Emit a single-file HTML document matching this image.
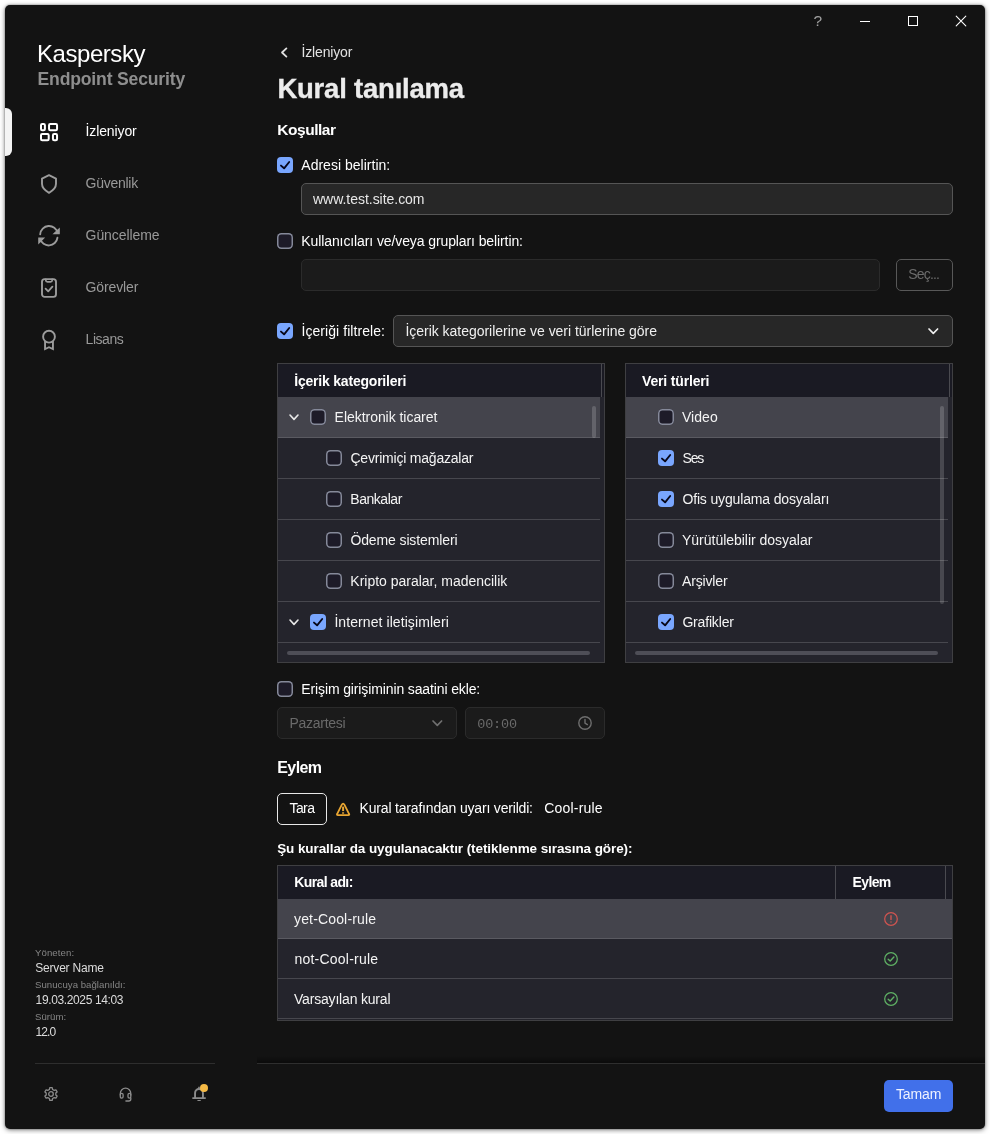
<!DOCTYPE html>
<html lang="tr">
<head>
<meta charset="utf-8">
<title>Kural tanılama</title>
<style>
*{box-sizing:border-box;margin:0;padding:0}
html,body{width:990px;height:1134px;background:#fff;overflow:hidden}
body{font-family:"Liberation Sans",sans-serif;color:#fff;font-size:14px;position:relative}
.win{position:absolute;left:5px;top:5px;width:980px;height:1124px;background:#131313;border-radius:5px;box-shadow:0 1px 5px rgba(0,0,0,.5),0 0 2px rgba(0,0,0,.4)}
.a{position:absolute}
.t{position:absolute;white-space:nowrap}
.cb{position:absolute;width:16px;height:16px;border-radius:4.5px;background:#1d1b28;box-shadow:inset 0 0 0 1.5px #858999}
.cb.on{background:#79a6fe;box-shadow:none;border-radius:4px}
.cb svg{position:absolute;left:0;top:0;width:16px;height:16px}
.inp{position:absolute;border:1px solid #555;border-radius:5px;background:#272727}
.inp.dis{border-color:#2b2b2b;background:#1b1b1b}
.tbl{position:absolute;border:1px solid #3f3f42;background:#24242c;overflow:hidden}
.th{position:absolute;left:0;top:0;background:#1a1a23}
.row{position:absolute;left:0;height:41px;border-bottom:1px solid #47474e}
.row.sel{background:#44444c;border-bottom-color:#5a5a61}
svg{display:block;overflow:visible}
.ic{position:absolute;fill:none;stroke-linecap:round;stroke-linejoin:round}
</style>
</head>
<body>
<div id="app" style="position:absolute;left:0;top:0;width:990px;height:1134px;will-change:transform">
<div class="win"></div>
<!-- title bar -->
<div class="t" style="left:813.60px;top:10px;font-size:15.5px;line-height:22px;height:22px;color:#a2a2a2;">?</div>
<div class="a" style="left:860px;top:21px;width:10px;height:1px;background:#fff"></div>
<div class="a" style="left:908px;top:16px;width:10px;height:10px;border:1px solid #fff"></div>
<svg class="ic" style="left:956px;top:16px" width="10" height="10" stroke="#fff" stroke-width="1.1" stroke-linecap="butt"><path d="M0.2 0.2 L9.8 9.8 M9.8 0.2 L0.2 9.8"/></svg>
<!-- sidebar -->
<div class="t" style="left:37.00px;top:37px;font-size:24px;line-height:34px;height:34px;color:#fff;letter-spacing:-0.445px;">Kaspersky</div>
<div class="t" style="left:37.50px;top:67px;font-size:17.6px;line-height:25px;height:25px;color:#8e8e8e;font-weight:bold;letter-spacing:-0.176px;">Endpoint Security</div>
<div class="a" style="left:5px;top:108px;width:7px;height:48px;background:#f4f4f4;border-radius:0 6px 6px 0"></div>
<div class="t" style="left:85.60px;top:121px;font-size:14px;line-height:20px;height:20px;color:#fff;letter-spacing:-0.128px;">İzleniyor</div>
<div class="t" style="left:85.60px;top:173px;font-size:14px;line-height:20px;height:20px;color:#999;letter-spacing:-0.266px;">Güvenlik</div>
<div class="t" style="left:85.60px;top:225px;font-size:14px;line-height:20px;height:20px;color:#999;letter-spacing:-0.087px;">Güncelleme</div>
<div class="t" style="left:85.60px;top:277px;font-size:14px;line-height:20px;height:20px;color:#999;letter-spacing:-0.141px;">Görevler</div>
<div class="t" style="left:85.60px;top:329px;font-size:14px;line-height:20px;height:20px;color:#999;letter-spacing:-0.460px;">Lisans</div>
<svg class="ic" style="left:40px;top:123px" width="18" height="18" stroke="#fff" stroke-width="2"><rect x="1" y="1" width="3.9" height="6.2" rx="1.2"/><rect x="9.05" y="1" width="8" height="6.2" rx="1.2"/><rect x="1" y="11" width="7.7" height="6.2" rx="1.2"/><rect x="12.95" y="11" width="4.1" height="6.2" rx="1.2"/></svg>
<svg class="ic" style="left:41px;top:174px" width="16" height="20" stroke="#9c9c9c" stroke-width="1.9"><path d="M8 1.1 L15 4.6 V9.8 C15 13.8 12 16.6 8 18.8 C4 16.6 1 13.8 1 9.8 V4.6 Z"/></svg>
<svg class="ic" style="left:38px;top:225px" width="22" height="22" stroke="#9c9c9c" stroke-width="1.9" stroke-linecap="butt"><path d="M2.2 9.2 A8.8 8.8 0 0 1 19.6 8"/><path d="M19.4 12.8 A8.8 8.8 0 0 1 2.2 14"/><path d="M21.2 3.8 V8.6 H16 Z" fill="#9c9c9c" stroke-width="1.2" stroke-linejoin="miter"/><path d="M0.85 18 V13.2 H5.7 Z" fill="#9c9c9c" stroke-width="1.2" stroke-linejoin="miter"/></svg>
<svg class="ic" style="left:41px;top:277px" width="16" height="21" stroke="#9c9c9c" stroke-width="1.9"><rect x="1" y="2.1" width="14" height="17.75" rx="2.6"/><path d="M4.8 2.3 V3.3 A1.6 1.6 0 0 0 6.4 4.9 H9.6 A1.6 1.6 0 0 0 11.2 3.3 V2.3" stroke-width="1.7"/><path d="M4.6 11.6 L7.2 14.3 L11.4 9.7" stroke-width="1.8"/></svg>
<svg class="ic" style="left:42px;top:329px" width="14" height="21" stroke="#9c9c9c" stroke-width="1.9"><circle cx="7" cy="7.7" r="5.9"/><path d="M3.06 12.8 V20.1 L7 18.2 L10.94 20.1 V12.8" stroke-linejoin="miter"/></svg>
<div class="t" style="left:35.00px;top:946px;font-size:9.6px;line-height:13px;height:13px;color:#868686;letter-spacing:0.100px;">Yöneten:</div>
<div class="t" style="left:35.30px;top:960px;font-size:12px;line-height:17px;height:17px;color:#dcdcdc;letter-spacing:-0.209px;">Server Name</div>
<div class="t" style="left:35.00px;top:978px;font-size:9.6px;line-height:13px;height:13px;color:#868686;letter-spacing:0.043px;">Sunucuya bağlanıldı:</div>
<div class="t" style="left:35.60px;top:992px;font-size:12px;line-height:17px;height:17px;color:#dcdcdc;letter-spacing:-0.369px;">19.03.2025 14:03</div>
<div class="t" style="left:35.00px;top:1010px;font-size:9.6px;line-height:13px;height:13px;color:#868686;letter-spacing:0.060px;">Sürüm:</div>
<div class="t" style="left:35.60px;top:1024px;font-size:12px;line-height:17px;height:17px;color:#dcdcdc;letter-spacing:-0.925px;">12.0</div>
<div class="a" style="left:35px;top:1063px;width:180px;height:1px;background:#2e2e2e"></div>
<svg class="ic" style="left:44px;top:1087px" width="14" height="14" stroke="#8c8c8c" stroke-width="1.3"><circle cx="7" cy="7" r="2.3"/><path d="M5.8 0.7 H8.2 L8.6 2.5 L10.2 3.4 L11.9 2.8 L13.1 4.9 L11.8 6.1 V7.9 L13.1 9.1 L11.9 11.2 L10.2 10.6 L8.6 11.5 L8.2 13.3 H5.8 L5.4 11.5 L3.8 10.6 L2.1 11.2 L0.9 9.1 L2.2 7.9 V6.1 L0.9 4.9 L2.1 2.8 L3.8 3.4 L5.4 2.5 Z"/></svg>
<svg class="ic" style="left:118.5px;top:1086.5px" width="13" height="15" stroke="#8c8c8c" stroke-width="1.3"><path d="M1.3 8 V6.6 A5.25 5.4 0 0 1 11.8 6.6 V8"/><rect x="1.3" y="6.4" width="2.8" height="4.7" rx="1.4"/><rect x="9" y="6.4" width="2.8" height="4.7" rx="1.4"/><path d="M11.8 11 V12 A2 2 0 0 1 9.8 14 H6.9"/></svg>
<svg class="ic" style="left:192px;top:1086px" width="14" height="16" stroke="#8c8c8c" stroke-width="1.9" stroke-linecap="butt"><path d="M3.06 12.1 V6.9 A3.94 3.94 0 0 1 10.94 6.9 V12.1"/><path d="M1 12.1 H13.1" stroke-width="1.8"/><path d="M7 1.2 V3.2" stroke-width="1.4"/><path d="M5.9 14.5 H8.3" stroke-width="1.2"/></svg>
<div class="a" style="left:199.8px;top:1083.9px;width:8.4px;height:8.4px;border-radius:50%;background:#f5b945"></div>
<!-- main -->
<svg class="ic" style="left:281.4px;top:47.8px" width="6" height="9" stroke="#e0e0e0" stroke-width="1.8"><path d="M5.4 0.4 L1 4.5 L5.4 8.6"/></svg>
<div class="t" style="left:301.50px;top:42px;font-size:14px;line-height:20px;height:20px;color:#e2e2e2;letter-spacing:-0.153px;">İzleniyor</div>
<div class="t" style="left:277.40px;top:70px;font-size:27.5px;line-height:38px;height:38px;color:#ececec;font-weight:bold;letter-spacing:-0.214px;-webkit-text-stroke:0.35px #ececec;">Kural tanılama</div>
<div class="t" style="left:277.30px;top:119px;font-size:15.5px;line-height:22px;height:22px;color:#fff;font-weight:bold;letter-spacing:-0.471px;">Koşullar</div>
<div class="cb on" style="left:277px;top:157px"><svg viewBox="0 0 16 16"><path d="M4 8.6 L7.1 11.3 L12.2 5" fill="none" stroke="#07071a" stroke-width="1.9" stroke-linecap="round" stroke-linejoin="round"/></svg></div>
<div class="t" style="left:301.30px;top:155px;font-size:14px;line-height:20px;height:20px;color:#fff;letter-spacing:0.014px;">Adresi belirtin:</div>
<div class="inp" style="left:301px;top:183px;width:652px;height:32px"></div>
<div class="t" style="left:313.06px;top:189px;font-size:14px;line-height:20px;height:20px;color:#e8e8e8;letter-spacing:-0.035px;">www.test.site.com</div>
<div class="cb g" style="left:277px;top:233px"></div>
<div class="t" style="left:301.30px;top:231px;font-size:14px;line-height:20px;height:20px;color:#fff;letter-spacing:-0.102px;">Kullanıcıları ve/veya grupları belirtin:</div>
<div class="inp dis" style="left:301px;top:259px;width:579px;height:32px"></div>
<div class="inp dis" style="left:896px;top:259px;width:57px;height:32px;background:#151515;border-color:#585858"></div>
<div class="t" style="left:908.30px;top:264px;font-size:14px;line-height:20px;height:20px;color:#6c6c6c;letter-spacing:-0.822px;">Seç...</div>
<div class="cb on" style="left:277px;top:323px"><svg viewBox="0 0 16 16"><path d="M4 8.6 L7.1 11.3 L12.2 5" fill="none" stroke="#07071a" stroke-width="1.9" stroke-linecap="round" stroke-linejoin="round"/></svg></div>
<div class="t" style="left:301.50px;top:321px;font-size:14px;line-height:20px;height:20px;color:#fff;letter-spacing:0.062px;">İçeriği filtrele:</div>
<div class="inp" style="left:393px;top:315px;width:560px;height:32px"></div>
<div class="t" style="left:405.50px;top:321px;font-size:14px;line-height:20px;height:20px;color:#f0f0f0;letter-spacing:-0.032px;">İçerik kategorilerine ve veri türlerine göre</div>
<svg class="ic" style="left:928.7px;top:329px" width="8.6" height="4.4" stroke="#f0f0f0" stroke-width="1.7"><path d="M0 0 L4.3 4.4 L8.6 0"/></svg>
<div class="tbl" style="left:277px;top:363px;width:328px;height:300px">
<div class="th" style="width:324px;height:33px;border-right:1px solid #4a4a50"></div>
<div class="th" style="left:324px;width:2px;height:33px"></div>
<div class="row sel" style="top:33px;width:322px"></div>
<div class="row" style="top:74px;width:322px"></div>
<div class="row" style="top:115px;width:322px"></div>
<div class="row" style="top:156px;width:322px"></div>
<div class="row" style="top:197px;width:322px"></div>
<div class="row" style="top:238px;width:322px"></div>
<div class="row" style="top:279px;width:322px"></div>
<div class="a" style="left:314px;top:42px;width:4px;height:32px;border-radius:2px;background:rgba(255,255,255,.17)"></div>
<div class="a" style="left:9px;top:286.5px;width:303px;height:4px;border-radius:2px;background:#4e4e57"></div>
</div>
<div class="t" style="left:294.30px;top:371px;font-size:14px;line-height:20px;height:20px;color:#fff;font-weight:bold;letter-spacing:-0.213px;">İçerik kategorileri</div>
<div class="tbl" style="left:625px;top:363px;width:328px;height:300px">
<div class="th" style="width:324px;height:33px;border-right:1px solid #4a4a50"></div>
<div class="th" style="left:324px;width:2px;height:33px"></div>
<div class="row sel" style="top:33px;width:322px"></div>
<div class="row" style="top:74px;width:322px"></div>
<div class="row" style="top:115px;width:322px"></div>
<div class="row" style="top:156px;width:322px"></div>
<div class="row" style="top:197px;width:322px"></div>
<div class="row" style="top:238px;width:322px"></div>
<div class="row" style="top:279px;width:322px"></div>
<div class="a" style="left:314px;top:42px;width:4px;height:198px;border-radius:2px;background:rgba(255,255,255,.17)"></div>
<div class="a" style="left:9px;top:286.5px;width:303px;height:4px;border-radius:2px;background:#4e4e57"></div>
</div>
<div class="t" style="left:642.00px;top:371px;font-size:14px;line-height:20px;height:20px;color:#fff;font-weight:bold;letter-spacing:-0.159px;">Veri türleri</div>
<svg class="ic" style="left:290px;top:415.3px" width="8" height="4.4" stroke="#e8e8e8" stroke-width="1.6"><path d="M0 0 L4 4.4 L8 0"/></svg>
<svg class="ic" style="left:290px;top:620.3px" width="8" height="4.4" stroke="#e8e8e8" stroke-width="1.6"><path d="M0 0 L4 4.4 L8 0"/></svg>
<div class="cb" style="left:310px;top:409px"></div>
<div class="t" style="left:334.60px;top:407px;font-size:14px;line-height:20px;height:20px;color:#f4f4f4;letter-spacing:-0.041px;">Elektronik ticaret</div>
<div class="cb" style="left:326px;top:450px"></div>
<div class="t" style="left:350.40px;top:448px;font-size:14px;line-height:20px;height:20px;color:#f4f4f4;letter-spacing:-0.206px;">Çevrimiçi mağazalar</div>
<div class="cb" style="left:326px;top:491px"></div>
<div class="t" style="left:350.30px;top:489px;font-size:14px;line-height:20px;height:20px;color:#f4f4f4;letter-spacing:-0.464px;">Bankalar</div>
<div class="cb" style="left:326px;top:532px"></div>
<div class="t" style="left:350.40px;top:530px;font-size:14px;line-height:20px;height:20px;color:#f4f4f4;letter-spacing:-0.116px;">Ödeme sistemleri</div>
<div class="cb" style="left:326px;top:573px"></div>
<div class="t" style="left:350.30px;top:571px;font-size:14px;line-height:20px;height:20px;color:#f4f4f4;letter-spacing:-0.006px;">Kripto paralar, madencilik</div>
<div class="cb on" style="left:310px;top:614px"><svg viewBox="0 0 16 16"><path d="M4 8.6 L7.1 11.3 L12.2 5" fill="none" stroke="#07071a" stroke-width="1.9" stroke-linecap="round" stroke-linejoin="round"/></svg></div>
<div class="t" style="left:334.40px;top:612px;font-size:14px;line-height:20px;height:20px;color:#f4f4f4;letter-spacing:0.079px;">İnternet iletişimleri</div>
<div class="cb" style="left:658px;top:409px"></div>
<div class="t" style="left:682.00px;top:407px;font-size:14px;line-height:20px;height:20px;color:#f4f4f4;letter-spacing:0.034px;">Video</div>
<div class="cb on" style="left:658px;top:450px"><svg viewBox="0 0 16 16"><path d="M4 8.6 L7.1 11.3 L12.2 5" fill="none" stroke="#07071a" stroke-width="1.9" stroke-linecap="round" stroke-linejoin="round"/></svg></div>
<div class="t" style="left:682.50px;top:448px;font-size:14px;line-height:20px;height:20px;color:#f4f4f4;letter-spacing:-1.200px;">Ses</div>
<div class="cb on" style="left:658px;top:491px"><svg viewBox="0 0 16 16"><path d="M4 8.6 L7.1 11.3 L12.2 5" fill="none" stroke="#07071a" stroke-width="1.9" stroke-linecap="round" stroke-linejoin="round"/></svg></div>
<div class="t" style="left:682.40px;top:489px;font-size:14px;line-height:20px;height:20px;color:#f4f4f4;letter-spacing:-0.145px;">Ofis uygulama dosyaları</div>
<div class="cb" style="left:658px;top:532px"></div>
<div class="t" style="left:682.00px;top:530px;font-size:14px;line-height:20px;height:20px;color:#f4f4f4;letter-spacing:-0.017px;">Yürütülebilir dosyalar</div>
<div class="cb" style="left:658px;top:573px"></div>
<div class="t" style="left:682.00px;top:571px;font-size:14px;line-height:20px;height:20px;color:#f4f4f4;letter-spacing:-0.155px;">Arşivler</div>
<div class="cb on" style="left:658px;top:614px"><svg viewBox="0 0 16 16"><path d="M4 8.6 L7.1 11.3 L12.2 5" fill="none" stroke="#07071a" stroke-width="1.9" stroke-linecap="round" stroke-linejoin="round"/></svg></div>
<div class="t" style="left:682.40px;top:612px;font-size:14px;line-height:20px;height:20px;color:#f4f4f4;letter-spacing:-0.172px;">Grafikler</div>
<div class="cb g" style="left:277px;top:681px"></div>
<div class="t" style="left:301.30px;top:679px;font-size:14px;line-height:20px;height:20px;color:#fff;letter-spacing:-0.126px;">Erişim girişiminin saatini ekle:</div>
<div class="inp dis" style="left:277px;top:707px;width:180px;height:32px"></div>
<div class="t" style="left:289.50px;top:713px;font-size:14px;line-height:20px;height:20px;color:#6a6a6a;letter-spacing:-0.272px;">Pazartesi</div>
<svg class="ic" style="left:433px;top:721.2px" width="8.6" height="4.4" stroke="#707070" stroke-width="1.7"><path d="M0 0 L4.3 4.4 L8.6 0"/></svg>
<div class="inp dis" style="left:465px;top:707px;width:140px;height:32px"></div>
<div class="t" style="left:477.30px;top:715px;font-size:13.5px;line-height:19px;height:19px;color:#6a6a6a;letter-spacing:-0.200px;font-family:'Liberation Mono',monospace;">00:00</div>
<svg class="ic" style="left:578px;top:716px" width="14" height="14" stroke="#6e6e6e" stroke-width="1.4"><circle cx="7" cy="7" r="6.2"/><path d="M7 3.4 V7.2 L9.4 8.6"/></svg>
<div class="t" style="left:277.30px;top:757px;font-size:16px;line-height:22px;height:22px;color:#fff;font-weight:bold;letter-spacing:-0.606px;">Eylem</div>
<div class="a" style="left:277px;top:793px;width:50px;height:32px;border:1px solid #e8e8e8;border-radius:5px"></div>
<div class="t" style="left:289.50px;top:798px;font-size:14px;line-height:20px;height:20px;color:#fff;letter-spacing:-0.583px;">Tara</div>
<svg class="ic" style="left:335px;top:801.8px" width="16" height="15" stroke="#e9a632" stroke-width="1.8"><path d="M6.7 2.9 Q8.1 0.4 9.5 2.9 L14 11.8 Q14.8 13.2 13.2 13.2 H3 Q1.4 13.2 2.2 11.8 Z"/><path d="M8.1 4.6 V9.1" stroke-width="2" stroke-linecap="butt"/><path d="M8.1 10.3 V11.7" stroke-width="2" stroke-linecap="butt"/></svg>
<div class="t" style="left:359.60px;top:798px;font-size:14px;line-height:20px;height:20px;color:#fff;letter-spacing:-0.187px;">Kural tarafından uyarı verildi:</div>
<div class="t" style="left:544.30px;top:798px;font-size:14px;line-height:20px;height:20px;color:#fff;letter-spacing:0.186px;">Cool-rule</div>
<div class="t" style="left:277.20px;top:839px;font-size:13.5px;line-height:19px;height:19px;color:#fff;font-weight:bold;letter-spacing:-0.086px;">Şu kurallar da uygulanacaktır (tetiklenme sırasına göre):</div>
<div class="tbl" style="left:277px;top:865px;width:676px;height:156px">
<div class="th" style="width:558px;height:33px;border-right:1px solid #4a4a50"></div>
<div class="th" style="left:558px;width:110px;height:33px;border-right:1px solid #4a4a50"></div>
<div class="th" style="left:668px;width:6px;height:33px"></div>
<div class="row sel" style="top:33px;width:674px;height:40px"></div>
<div class="row" style="top:73px;width:674px;height:40px"></div>
<div class="row" style="top:113px;width:674px;height:40px"></div>
</div>
<div class="t" style="left:294.30px;top:872px;font-size:14px;line-height:20px;height:20px;color:#fff;font-weight:bold;letter-spacing:-0.618px;">Kural adı:</div>
<div class="t" style="left:852.50px;top:872px;font-size:14px;line-height:20px;height:20px;color:#fff;font-weight:bold;letter-spacing:-0.613px;">Eylem</div>
<div class="t" style="left:294.00px;top:909px;font-size:14px;line-height:20px;height:20px;color:#f4f4f4;letter-spacing:0.156px;">yet-Cool-rule</div>
<div class="t" style="left:294.50px;top:949px;font-size:14px;line-height:20px;height:20px;color:#f4f4f4;letter-spacing:0.214px;">not-Cool-rule</div>
<div class="t" style="left:294.00px;top:989px;font-size:14px;line-height:20px;height:20px;color:#f4f4f4;letter-spacing:-0.188px;">Varsayılan kural</div>
<svg class="ic" style="left:884px;top:912px" width="14" height="14" stroke="#cf5450" stroke-width="1.25"><circle cx="7" cy="7" r="6.3"/><path d="M7 3.8 V7.6 M7 9.9 V10" stroke-width="1.4"/></svg>
<svg class="ic" style="left:884px;top:952.2px" width="14" height="14" stroke="#5fb064" stroke-width="1.25"><circle cx="7" cy="7" r="6.3"/><path d="M4.2 7.2 L6.2 9.1 L9.9 5.1" stroke-width="1.4"/></svg>
<svg class="ic" style="left:884px;top:991.8px" width="14" height="14" stroke="#5fb064" stroke-width="1.25"><circle cx="7" cy="7" r="6.3"/><path d="M4.2 7.2 L6.2 9.1 L9.9 5.1" stroke-width="1.4"/></svg>
<div class="a" style="left:257px;top:1056px;width:728px;height:7px;background:linear-gradient(to bottom,rgba(0,0,0,0),rgba(0,0,0,.45))"></div>
<div class="a" style="left:257px;top:1063px;width:728px;height:1px;background:#2e2e2e"></div>
<div class="a" style="left:884px;top:1080px;width:69px;height:32px;border-radius:5px;background:#4170ea"></div>
<div class="t" style="left:896.00px;top:1084px;font-size:14px;line-height:20px;height:20px;color:#eef2ff;letter-spacing:-0.144px;">Tamam</div>
</div>
</body>
</html>
